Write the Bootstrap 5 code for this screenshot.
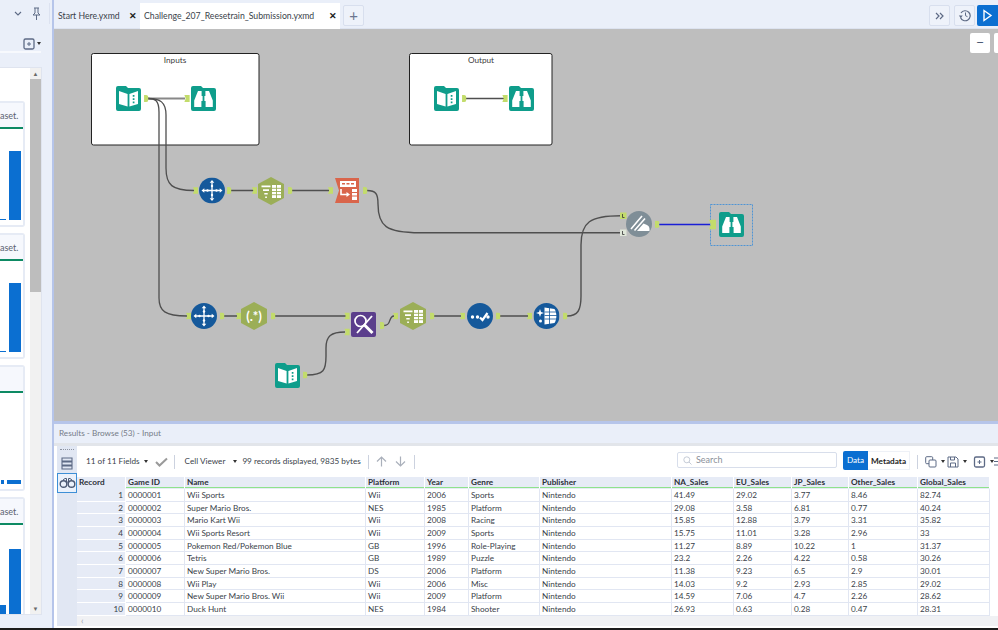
<!DOCTYPE html>
<html lang="en">
<head>
    <meta charset="UTF-8">
    <meta name="viewport" content="width=device-width, initial-scale=1.0">
    <title>Challenge_207_Reesetrain_Submission.yxmd</title>
    <link href="https://cdn.jsdelivr.net/npm/bootstrap@5.3.0/dist/css/bootstrap.min.css" rel="stylesheet">
    <style>
        html, body { height: 630px; margin: 0; overflow: hidden; }
        body { font-family: "Lato", "Noto Sans", sans-serif; font-size: 8.2px; color: #3a3f4a; background: #eaeff9; }
        .app-shell { height: 628px; }
        .app-foot { height: 2px; background: #1c1c1c; }

        /* left panel */
        .side-pane { width: 54px; flex: none; border-right: 2px solid #b6c5ea; background: #eaeff9; }
        .side-head { height: 21px; margin-top: 3px; padding-right: 7px; border-right: 1px solid #dce2f0; margin-right: 2px; gap: 9px; }
        .side-tools { height: 29px; padding: 12px 0 0 0; border-bottom: 2px solid #f7f9fd; margin-right: 11px; gap: 2px; }
        .side-body { margin-top: 14px; height: 548px; margin-right: 10px; background: #fff; border: 1px solid #dfe4ef; border-left: 0; overflow: hidden; }
        .side-list { width: 29px; padding: 33px 0 0 0; gap: 6px; overflow: hidden; }
        .side-card { flex: none; width: 25px; height: 126px; border: 2px solid #e6ebf5; border-left: 0; border-radius: 0 3px 3px 0; background: #fff; overflow: hidden; }
        .side-note { height: 26px; background: #f6f8fd; font-size: 9px; line-height: 26px; text-align: right; color: #5b6270; padding-right: 6px; white-space: nowrap; border-bottom: 2px solid #0d8a63; }
        .side-note-empty { color: transparent; }
        .side-chart { flex: 1; padding-right: 2px; justify-content: flex-end; gap: 3px; align-items: flex-end; margin-bottom: 5px; }
        .side-bar { background: #0b6fd1; flex: none; }
        .side-scroll { width: 11px; background: #f1f1f1; }
        .side-scroll-btn { height: 11px; color: #6a6a6a; font-size: 6px; line-height: 11px; text-align: center; }
        .side-scroll-thumb { height: 213px; background: #bdbdbd; }

        /* tabs */
        .work-pane { min-width: 0; }
        .tab-strip { height: 29px; flex: none; padding-top: 3px; background: #eaeff9; border-bottom: 1px solid #dde3f0; }
        .doc-tab { height: 26px; padding: 0 3px 0 4px; font-size: 8.7px; line-height: 26px; color: #3a3f4a; justify-content: space-between; white-space: nowrap; }
        .doc-tab-on { background: #fff; width: 200px; }
        .doc-tab-off { width: 86px; }
        .tab-x { font-size: 9px; color: #222; font-weight: 600; }
        .tab-btn { width: 21px; height: 21px; margin-top: 2px; border: 1px solid #d8dfee; border-radius: 2px; background: #eef2fa; color: #6b7690; font-size: 15px; line-height: 18px; text-align: center; }
        .tab-plus { margin-left: 3px; }
        .run-btn { width: 21px; height: 21px; margin: 2px 0 0 2px; background: #0b6fd1; border-radius: 2px 0 0 2px; }

        /* canvas */
        .flow-canvas { height: 392px; flex: none; background: #bebebe; position: relative; overflow: hidden; }
        .flow-canvas > svg { display: block; }
        .zoom-btns { position: absolute; top: 4px; left: 916px; gap: 4px; }
        .zoom-btn { width: 20px; height: 20px; background: #fff; border-radius: 2px; color: #4c5a75; font-size: 14px; line-height: 18px; text-align: center; }
        .flow-label { font-size: 8.2px; fill: #3c3c3c; text-anchor: middle; font-family: "Lato", sans-serif; }

        /* results */
        .result-pane { flex: 1; min-height: 0; border-top: 3px solid #b6c5ea; background: #fff; }
        .result-title { height: 19px; flex: none; padding-left: 5px; line-height: 18px; color: #767c88; background: #eaeff9; }
        .result-gap { height: 3px; flex: none; background: #e2e5ea; }
        .result-body { flex: 1; min-height: 0; padding-bottom: 2px; }
        .view-rail { width: 20px; flex: none; margin-left: 3px; background: #e1e7f3; }
        .view-grip { height: 4px; margin: 3px 3px 0; border-top: 1px dotted #8d93a0; }
        .view-btn { height: 20px; }
        .view-btn-on { border: 1px solid #3d8fd6; background: #eaf1fb; }
        .result-main { min-width: 0; }
        .result-tools { height: 31px; flex: none; padding-left: 9px; color: #3a3f4a; }
        .tool-sep { width: 1px; height: 14px; background: #ccd2df; flex: none; }
        .tool-caret { width: 0; height: 0; border: 2px solid transparent; border-top: 3px solid #333; border-bottom: 0; flex: none; }
        .search-box { width: 160px; height: 16px; margin-bottom: 3px; border: 1px solid #d8deeb; border-radius: 2px; padding-left: 5px; color: #8b909a; gap: 4px; font-size: 9px; margin-left: auto; }
        .seg-btns { margin: 0 0 3px 6px; height: 19px; }
        .seg-on { width: 25px; background: #0b6fd1; color: #fff; line-height: 19px; text-align: center; border-radius: 2px 0 0 2px; }
        .seg-off { width: 42px; color: #222; line-height: 19px; text-align: center; font-weight: 700; background: #fff; border: 1px solid #eef1f7; border-left: 0; }
        .sep-after-seg { margin-left: 7px; }
        .icon-gap-a { margin-left: 7px; }
        .icon-gap-b { margin-left: 2px; }
        .icon-gap-c { margin-left: 6px; }
        .gap-check { margin-left: 7px; }
        .gap-sep { margin: 0 10px 0 6px; }
        .gap-count { margin-left: 5px; }
        .gap-arrows { margin: 0 7px 0 7px; }

        .data-wrap { width: 913px; height: 139px; overflow: hidden; }
        .data-grid { table-layout: fixed; width: 913px; font-size: 8.2px; margin: 0; border-collapse: separate; border-spacing: 0; --bs-table-color: #3a3f4a; }
        .data-grid th { height: 12px; padding: 0 0 0 2px; background: #e6ebf6; font-weight: 700; color: #2c3038; border: 0; border-right: 1px solid #fff; border-bottom: 1px solid #e6ebf6; line-height: 11px; }
        .data-grid th.has-line { box-shadow: inset 0 -1px 0 #8ee28c; }
        .data-grid td { height: 12.67px; padding: 1px 0 0 2px; border: 0; border-right: 1px solid #e1e6f2; border-bottom: 1px solid #e1e6f2; line-height: 10.5px; white-space: nowrap; overflow: hidden; }
        .data-grid td.rec-no { background: #e6ebf6; text-align: right; padding-right: 2px; border-color: #fff; }
        .h-scroll { height: 10px; background: #f0f1f4; color: #9ca1ab; line-height: 10px; padding-left: 4px; font-size: 9px; }
    </style>
</head>
<body>
    <svg width="0" height="0" class="position-absolute">
        <defs>
            <symbol id="n-book" viewBox="0 0 25 25">
                <path d="M2 0h8l2 2h11a2 2 0 0 1 2 2v19a2 2 0 0 1-2 2H2a2 2 0 0 1-2-2V2a2 2 0 0 1 2-2z" fill="#0f9d8b"/>
                <path d="M3 5l8.600 3v12.500L3 18zM22 5l-8.600 3v12.500l8.600-2.500z" fill="#fff"/>
                <path d="M17.600 9v1.700M17.600 12.300v1.700M17.600 15.600v1.700" stroke="#0f9d8b" stroke-width="1.700"/>
            </symbol>
            <symbol id="n-browse" viewBox="0 0 25 25">
                <path d="M2 0h8l2 2h11a2 2 0 0 1 2 2v19a2 2 0 0 1-2 2H2a2 2 0 0 1-2-2V2a2 2 0 0 1 2-2z" fill="#0f9d8b"/>
                <path d="M7 5h3.600v5h1v5h-1.200v6H3.200v-6.500zM18 5h-3.600v5h-1v5h1.200v6h7.200v-6.500z" fill="#fff"/>
            </symbol>
            <symbol id="n-select" viewBox="0 0 26 26">
                <circle cx="13" cy="13" r="13" fill="#15599b"/>
                <path d="M13 5v16M5 13h16" stroke="#fff" stroke-width="1.300"/>
                <path d="M13 2.500l2.300 2.800h-4.600zM13 23.500l2.300-2.800h-4.600zM2.500 13l2.800-2.300v4.600zM23.500 13l-2.800-2.300v4.600z" fill="#fff"/>
                <circle cx="13" cy="8.500" r="1.200" fill="#fff"/><circle cx="13" cy="17.500" r="1.200" fill="#fff"/><circle cx="8.500" cy="13" r="1.200" fill="#fff"/><circle cx="17.500" cy="13" r="1.200" fill="#fff"/>
            </symbol>
            <symbol id="n-hex" viewBox="0 0 26 28">
                <path d="M13 0l13 7v14l-13 7-13-7V7z" fill="#9bae57"/>
                <path d="M3.500 8.500h9v1.700h-9zM5 12.200h6v1.700H5zM6.300 15.900h3.400v1.700H6.300zM7.200 19.400h1.700v1.600H7.200z" fill="#fff"/>
                <path d="M14 8h9v13h-9z" fill="#fff"/>
                <path d="M14 11.300h9M14 14.500h9M14 17.700h9M18.500 8v13" stroke="#9bae57" stroke-width=".9"/>
            </symbol>
            <symbol id="n-regex" viewBox="0 0 26 28">
                <path d="M13 0l13 7v14l-13 7-13-7V7z" fill="#9bae57"/>
            </symbol>
            <symbol id="n-dyn" viewBox="0 0 25 25">
                <path d="M1 0h24v25H1l4-12.500z" fill="#d9654b"/>
                <path d="M6 3h16v6H6z" fill="#fff"/>
                <path d="M8 5h3v1.500H8zM12.500 5h3v1.500h-3zM17 5h3v1.500h-3z" fill="#d9654b"/>
                <path d="M7 11v5.500h6" fill="none" stroke="#fff" stroke-width="1.600"/>
                <path d="M12.500 14l3.500 2.500-3.500 2.500z" fill="#fff"/>
                <path d="M18 11h5v11h-5z" fill="#fff"/>
                <path d="M18 14.500h5M18 18h5" stroke="#d9654b"/>
            </symbol>
            <symbol id="n-find" viewBox="0 0 25 25">
                <rect width="25" height="25" rx="2" fill="#5b3e8c"/>
                <circle cx="9.500" cy="9" r="5.500" fill="none" stroke="#fff" stroke-width="1.700"/>
                <path d="M13.500 13l8 8" stroke="#fff" stroke-width="3"/>
                <path d="M21 4L6 21" stroke="#fff" stroke-width="1.800"/>
            </symbol>
            <symbol id="n-check" viewBox="0 0 26 26">
                <circle cx="13" cy="13" r="13" fill="#15599b"/>
                <circle cx="5.500" cy="14" r="1.700" fill="#fff"/><circle cx="10.500" cy="14" r="1.700" fill="#fff"/><circle cx="21" cy="14" r="1.700" fill="#fff"/>
                <path d="M13 14.500l2.500 2.500 5-7" fill="none" stroke="#fff" stroke-width="2.200"/>
            </symbol>
            <symbol id="n-form" viewBox="0 0 26 26">
                <circle cx="13" cy="13" r="13" fill="#15599b"/>
                <path d="M11 4.500l10 1.500c2.500 4 2.500 10 0 14l-10 1.500z" fill="#fff"/>
                <path d="M11 9h13M11 12.500h13M11 16h13M16 4v18" stroke="#15599b" stroke-width=".8"/>
                <path d="M6.500 6l1 3 3 1-3 1-1 3-1-3-3-1 3-1z" fill="#fff"/>
                <circle cx="7" cy="18" r="1.500" fill="#fff"/>
            </symbol>
            <symbol id="n-join" viewBox="0 0 26 26">
                <circle cx="13" cy="13" r="13" fill="#7f8e97"/>
                <path d="M5 18L16 5M8.500 19.500L19 7.500" stroke="#fff" stroke-width="1.600"/>
                <path d="M11 20l6.500-7.500 3.500 1.500c1.500 .8 2.500 2 2.500 4v2z" fill="#fff"/>
            </symbol>
            <symbol id="a-in" viewBox="0 0 6 8"><path d="M0 0h6v8H0l1.500-4z" fill="#c3dc6b"/></symbol>
            <symbol id="a-out" viewBox="0 0 5 8"><path d="M0 0h2.500a2.500 3 0 0 1 2.500 3v2a2.500 3 0 0 1-2.500 3H0z" fill="#c3dc6b"/></symbol>
            <symbol id="i-frame" viewBox="1 1 12 12">
                <rect x="2" y="2" width="10" height="10" rx="1.500" fill="none" stroke="#5d6a85" stroke-width="1.300"/>
                <path d="M7 5v4M5 7h4" stroke="#5d6a85"/>
            </symbol>
        </defs>
    </svg>

    <div class="d-flex app-shell">
        <!-- Left panel -->
        <aside class="side-pane d-flex flex-column">
            <div class="side-head d-flex align-items-center justify-content-end">
                <svg width="8" height="5" viewBox="0 0 8 5"><path d="M1 1l3 3 3-3" fill="none" stroke="#5d6a85" stroke-width="1.100"/></svg>
                <svg width="11" height="13" viewBox="0 0 11 13"><path d="M3 1h5M4 1v5L2 8h7L7 6V1M5.500 8v5" fill="none" stroke="#5d6a85"/></svg>
            </div>
            <div class="side-tools d-flex align-items-center justify-content-end">
                <svg width="12" height="12"><use href="#i-frame" width="12" height="12"/></svg>
                <span class="tool-caret"></span>
            </div>
            <div class="side-body d-flex justify-content-between">
                <div class="side-list d-flex flex-column">
                    <div class="side-card d-flex flex-column">
                        <div class="side-note">aset.</div>
                        <div class="side-chart d-flex" data-bars="6:1,12:69"></div>
                    </div>
                    <div class="side-card d-flex flex-column">
                        <div class="side-note">aset.</div>
                        <div class="side-chart d-flex" data-bars="6:1,12:69"></div>
                    </div>
                    <div class="side-card d-flex flex-column">
                        <div class="side-note side-note-empty">-</div>
                        <div class="side-chart d-flex" data-bars="3:4,14:4"></div>
                    </div>
                    <div class="side-card d-flex flex-column">
                        <div class="side-note">aset.</div>
                        <div class="side-chart d-flex" data-bars="6:11,12:67"></div>
                    </div>
                </div>
                <div class="side-scroll d-flex flex-column">
                    <div class="side-scroll-btn">&#9650;</div>
                    <div class="side-scroll-thumb"></div>
                    <div class="flex-grow-1"></div>
                    <div class="side-scroll-btn">&#9660;</div>
                </div>
            </div>
        </aside>

        <div class="work-pane flex-grow-1 d-flex flex-column">
            <!-- Tabs -->
            <div class="tab-strip d-flex">
                <div class="doc-tab doc-tab-off d-flex"><span>Start Here.yxmd</span><span class="tab-x">&#10005;</span></div>
                <div class="doc-tab doc-tab-on d-flex"><span>Challenge_207_Reesetrain_Submission.yxmd</span><span class="tab-x">&#10005;</span></div>
                <div class="tab-btn tab-plus">+</div>
                <div class="ms-auto d-flex">
                    <div class="tab-btn d-flex align-items-center justify-content-center">
                        <svg width="9" height="8" viewBox="0 0 9 8"><path d="M1 1l3 3-3 3M5 1l3 3-3 3" fill="none" stroke="#5d6a85" stroke-width="1.200"/></svg>
                    </div>
                    <div class="tab-btn d-flex align-items-center justify-content-center ms-1">
                        <svg width="13" height="13" viewBox="0 0 13 13"><path d="M3 4a5 5 0 1 1-.5 4.500" fill="none" stroke="#5d6a85" stroke-width="1.200"/><path d="M.8 6.500l2 2.500 2-2.500z" fill="#5d6a85"/><path d="M7.500 3.500v3.200l2 1" fill="none" stroke="#5d6a85"/></svg>
                    </div>
                    <div class="run-btn d-flex align-items-center justify-content-center">
                        <svg width="11" height="13" viewBox="0 0 11 13"><path d="M2 1.500l7 5-7 5z" fill="none" stroke="#fff" stroke-width="1.400"/></svg>
                    </div>
                </div>
            </div>

            <!-- Workflow canvas -->
            <div class="flow-canvas">
                <svg width="944" height="392" viewBox="54 29 944 392">
                    <rect x="91.500" y="53.500" width="167.500" height="91.500" rx="2" fill="#fff" stroke="#222"/>
                    <text class="flow-label" x="175" y="63">Inputs</text>
                    <rect x="409.500" y="53.500" width="142.500" height="91.500" rx="2" fill="#fff" stroke="#222"/>
                    <text class="flow-label" x="481" y="63">Output</text>

                    <g fill="none" stroke="#4f4f4f" stroke-width="1.300">
                        <path d="M148 98.500H185" stroke="#888" stroke-width="2"/>
                        <path d="M148 98.500C155 98.500 159 100 159 112V298C159 311 165 316 187 316"/>
                        <path d="M148 98.500C160 98.500 166 102 166 115V168C166 185 172 190.500 194 190.500"/>
                        <path d="M466 98.500H504"/>
                        <path d="M231 190.500H254M292 190.500H329"/>
                        <path d="M367 190.500C376 190.500 378 194 378 204C378 226 386 232.700 420 232.700H620" stroke-width="1.400"/>
                        <path d="M224 316H237M275 316H346" stroke-width="1.500"/>
                        <path d="M384 325.500C392 325.500 388 316 394 316"/>
                        <path d="M434 316H461M500 316H528"/>
                        <path d="M567 316C578 316 581 310 581 296V245C581 222 590 215.700 621 215.700" stroke-width="1.400"/>
                        <path d="M307 375C324 375 326 370 326 356V348C326 336 331 332 345 332" stroke-width="1.400"/>
                    </g>
                    <path d="M659 224.500H710" stroke="#1a1fd6" stroke-width="1.400"/>
                    <rect x="710.500" y="204.500" width="42" height="41" fill="none" stroke="#4f94d4" stroke-dasharray="2 1"/>

                    <use href="#n-book" x="116" y="86" width="25" height="25"/>
                    <use href="#n-browse" x="191" y="86" width="25" height="25"/>
                    <use href="#n-book" x="434" y="86" width="25" height="25"/>
                    <use href="#n-browse" x="509" y="86" width="25" height="25"/>
                    <use href="#n-select" x="199" y="177.500" width="26" height="26"/>
                    <use href="#n-hex" x="258" y="177" width="26" height="28"/>
                    <use href="#n-dyn" x="334" y="178" width="25" height="25"/>
                    <use href="#n-join" x="626" y="211" width="26" height="26"/>
                    <use href="#n-browse" x="719" y="212" width="25" height="25"/>
                    <use href="#n-select" x="191" y="303" width="26" height="26"/>
                    <use href="#n-regex" x="241" y="302" width="26" height="28"/>
                    <text x="254" y="320.500" text-anchor="middle" fill="#fff" font-size="13" font-weight="700" font-family="Lato, sans-serif">(.*)</text>
                    <use href="#n-find" x="351" y="312" width="25" height="25"/>
                    <use href="#n-hex" x="400" y="302" width="26" height="28"/>
                    <use href="#n-check" x="467" y="303" width="26" height="26"/>
                    <use href="#n-form" x="533.500" y="303" width="26" height="26"/>
                    <use href="#n-book" x="275" y="363" width="25" height="25"/>

                    <use href="#a-out" x="144" y="95" width="4.500" height="7"/>
                    <use href="#a-in" x="184" y="95" width="6" height="7"/>
                    <use href="#a-out" x="462" y="95" width="4.500" height="7"/>
                    <use href="#a-in" x="502" y="95" width="6" height="7"/>
                    <use href="#a-in" x="193" y="187" width="5" height="7"/>
                    <use href="#a-out" x="227" y="187" width="4.500" height="7"/>
                    <use href="#a-in" x="252" y="187" width="5" height="7"/>
                    <use href="#a-out" x="288" y="187" width="4.500" height="7"/>
                    <use href="#a-in" x="328" y="187" width="5" height="7"/>
                    <use href="#a-out" x="363" y="187" width="4.500" height="7"/>
                    <use href="#a-in" x="186" y="312.500" width="5" height="7"/>
                    <use href="#a-out" x="220" y="312.500" width="4.500" height="7"/>
                    <use href="#a-in" x="236" y="312.500" width="5" height="7"/>
                    <use href="#a-out" x="271" y="312.500" width="4.500" height="7"/>
                    <use href="#a-in" x="344" y="312.500" width="6" height="7"/>
                    <use href="#a-in" x="344" y="328.500" width="6" height="7"/>
                    <use href="#a-out" x="380" y="322" width="4.500" height="7"/>
                    <use href="#a-in" x="393" y="312.500" width="5" height="7"/>
                    <use href="#a-out" x="430" y="312.500" width="4.500" height="7"/>
                    <use href="#a-in" x="460" y="312.500" width="5" height="7"/>
                    <use href="#a-out" x="496" y="312.500" width="4.500" height="7"/>
                    <use href="#a-in" x="527" y="312.500" width="5" height="7"/>
                    <use href="#a-out" x="563" y="312.500" width="4.500" height="7"/>
                    <use href="#a-out" x="303" y="371.500" width="4.500" height="7"/>
                    <rect x="620" y="212.500" width="6.500" height="6.500" fill="#c3dc6b"/>
                    <rect x="620" y="229.500" width="6.500" height="6.500" fill="#dfe6d8"/>
                    <path d="M622.500 214v3.500h2M622.500 231v3.500h2" fill="none" stroke="#333" stroke-width=".8"/>
                    <use href="#a-out" x="655" y="220.500" width="4.500" height="7.500"/>
                    <use href="#a-in" x="709" y="218.500" width="7" height="12"/>
                </svg>
                <div class="zoom-btns d-flex">
                    <div class="zoom-btn">&minus;</div>
                    <div class="zoom-btn"></div>
                </div>
            </div>

            <!-- Results -->
            <section class="result-pane d-flex flex-column">
                <div class="result-title">Results - Browse (53) - Input</div>
                <div class="result-gap"></div>
                <div class="result-body d-flex">
                    <div class="view-rail d-flex flex-column">
                        <div class="view-grip"></div>
                        <div class="view-btn d-flex align-items-center justify-content-center">
                            <svg width="12" height="13" viewBox="0 0 12 13"><path d="M1 1h10v3H1zM1 5h10v3H1zM1 9h10v3H1z" fill="none" stroke="#5d6a85" stroke-width="1.100"/></svg>
                        </div>
                        <div class="view-btn view-btn-on d-flex align-items-center justify-content-center">
                            <svg width="17" height="10" viewBox="0 0 17 10"><circle cx="4.500" cy="6" r="3.300" fill="none" stroke="#4c5a75" stroke-width="1.400"/><circle cx="12.500" cy="6" r="3.300" fill="none" stroke="#4c5a75" stroke-width="1.400"/><path d="M4 2l2-1.500h1.500V4h2V.5H11L13 2" fill="none" stroke="#4c5a75"/></svg>
                        </div>
                    </div>
                    <div class="result-main flex-grow-1 d-flex flex-column">
                        <div class="result-tools d-flex align-items-center">
                            <span>11 of 11 Fields</span>
                            <span class="tool-caret ms-1"></span>
                            <svg class="gap-check" width="13" height="10" viewBox="0 0 13 10"><path d="M1 5l3.500 3.500L12 1.500" fill="none" stroke="#9a9a9a" stroke-width="2"/></svg>
                            <span class="tool-sep gap-sep"></span>
                            <span>Cell Viewer</span>
                            <span class="tool-caret ms-2"></span>
                            <span class="gap-count">99 records displayed, 9835 bytes</span>
                            <span class="tool-sep gap-arrows"></span>
                            <svg width="11" height="11" viewBox="0 0 11 11"><path d="M5.500 10.500V1M1 5.500l4.500-4.500 4.500 4.500" fill="none" stroke="#aab0bb" stroke-width="1.200"/></svg>
                            <svg class="ms-2" width="11" height="11" viewBox="0 0 11 11"><path d="M5.500 .5V10M1 5.500l4.500 4.500 4.500-4.500" fill="none" stroke="#aab0bb" stroke-width="1.200"/></svg>
                            <span class="tool-sep ms-2"></span>
                            <div class="search-box d-flex align-items-center">
                                <svg width="9" height="9" viewBox="0 0 9 9"><circle cx="3.800" cy="3.800" r="3" fill="none" stroke="#c5cbd6"/><path d="M6 6l2.500 2.500" stroke="#c5cbd6"/></svg>
                                <span>Search</span>
                            </div>
                            <div class="seg-btns d-flex">
                                <div class="seg-on">Data</div>
                                <div class="seg-off">Metadata</div>
                            </div>
                            <span class="tool-sep sep-after-seg"></span>
                            <svg class="icon-gap-a" width="12" height="12" viewBox="0 0 12 12"><rect x=".7" y=".7" width="7" height="7" rx="1" fill="none" stroke="#5d6a85"/><rect x="4" y="4" width="7" height="7" rx="1" fill="#fff" stroke="#5d6a85"/></svg>
                            <span class="tool-caret ms-1"></span>
                            <svg class="icon-gap-b" width="12" height="12" viewBox="0 0 12 12"><path d="M1 1h8l2 2v8H1zM3.500 1v3h4V1M3.500 11V7h5v4" fill="none" stroke="#5d6a85"/></svg>
                            <span class="tool-caret ms-1"></span>
                            <svg class="icon-gap-c" width="13" height="12"><use href="#i-frame" width="13" height="12"/></svg>
                            <span class="tool-caret ms-1"></span>
                            <svg width="4" height="9" viewBox="0 0 4 9"><path d="M0 1h4M0 4.500h4M0 8h4" stroke="#5d6a85"/></svg>
                        </div>
                        <div class="data-wrap">
                            <table class="table data-grid">
                                <colgroup>
                                    <col style="width:49px"><col style="width:59px"><col style="width:181px"><col style="width:59px"><col style="width:44px"><col style="width:71px"><col style="width:132px"><col style="width:62px"><col style="width:58px"><col style="width:57px"><col style="width:69px"><col style="width:72px">
                                </colgroup>
                                <thead>
                                    <tr id="gridHead"></tr>
                                </thead>
                                <tbody id="gridBody"></tbody>
                            </table>
                        </div>
                        <div class="h-scroll">&#8249;</div>
                    </div>
                </div>
            </section>
        </div>
    </div>
    <div class="app-foot"></div>

    <script src="https://cdn.jsdelivr.net/npm/bootstrap@5.3.0/dist/js/bootstrap.bundle.min.js"></script>
    <script>
        const heads = ['Record', 'Game ID', 'Name', 'Platform', 'Year', 'Genre', 'Publisher', 'NA_Sales', 'EU_Sales', 'JP_Sales', 'Other_Sales', 'Global_Sales'];
        const rows = [
            ['Wii Sports', 'Wii', 2006, 'Sports', 41.49, 29.02, 3.77, 8.46, 82.74],
            ['Super Mario Bros.', 'NES', 1985, 'Platform', 29.08, 3.58, 6.81, 0.77, 40.24],
            ['Mario Kart Wii', 'Wii', 2008, 'Racing', 15.85, 12.88, 3.79, 3.31, 35.82],
            ['Wii Sports Resort', 'Wii', 2009, 'Sports', 15.75, 11.01, 3.28, 2.96, 33],
            ['Pokemon Red/Pokemon Blue', 'GB', 1996, 'Role-Playing', 11.27, 8.89, 10.22, 1, 31.37],
            ['Tetris', 'GB', 1989, 'Puzzle', 23.2, 2.26, 4.22, 0.58, 30.26],
            ['New Super Mario Bros.', 'DS', 2006, 'Platform', 11.38, 9.23, 6.5, 2.9, 30.01],
            ['Wii Play', 'Wii', 2006, 'Misc', 14.03, 9.2, 2.93, 2.85, 29.02],
            ['New Super Mario Bros. Wii', 'Wii', 2009, 'Platform', 14.59, 7.06, 4.7, 2.26, 28.62],
            ['Duck Hunt', 'NES', 1984, 'Shooter', 26.93, 0.63, 0.28, 0.47, 28.31]
        ];

        document.getElementById('gridHead').innerHTML = heads
            .map((h, i) => `<th class="${i ? 'has-line' : ''}">${h}</th>`).join('');

        document.getElementById('gridBody').innerHTML = rows.map((r, i) => {
            const id = String(i + 1).padStart(7, '0');
            const cells = [id, r[0], r[1], r[2], r[3], 'Nintendo', ...r.slice(4)];
            return `<tr><td class="rec-no">${i + 1}</td>${cells.map(c => `<td>${c}</td>`).join('')}</tr>`;
        }).join('');

        // side card bars, width:height
        document.querySelectorAll('.side-chart').forEach(chart => {
            chart.innerHTML = chart.dataset.bars.split(',').map(b => {
                const [w, h] = b.split(':');
                return `<div class="side-bar" style="width:${w}px;height:${h}px"></div>`;
            }).join('');
        });
    </script>
</body>
</html>
